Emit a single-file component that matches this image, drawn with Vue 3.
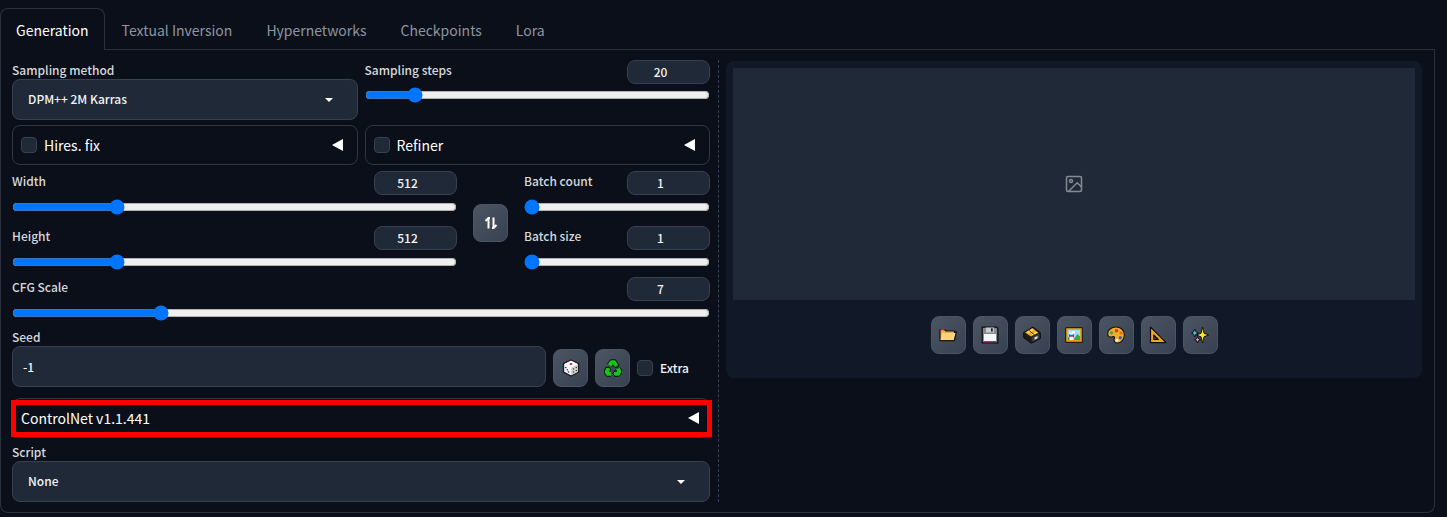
<script setup>
import { ref } from 'vue'

const tabs = ['Generation', 'Textual Inversion', 'Hypernetworks', 'Checkpoints', 'Lora']
const activeTab = ref('Generation')
const steps = ref(20)
const width = ref(512)
const height = ref(512)
const batchCount = ref(1)
const batchSize = ref(1)
const cfg = ref(7)
const seed = ref('-1')
const hires = ref(false)
const refiner = ref(false)
const extra = ref(false)

function swapSize() {
  const w = width.value
  width.value = height.value
  height.value = w
}
</script>

<template>
  <main class="page">
    <nav class="tabs">
      <button
        v-for="tab in tabs"
        :key="tab"
        type="button"
        class="tab"
        :class="{ active: tab === activeTab }"
        @click="activeTab = tab"
      >{{ tab }}</button>
    </nav>

    <div class="panel">
      <section class="settings">
        <div class="pair top">
          <div class="field">
            <label class="label" for="sampler">Sampling method</label>
            <div class="select-wrap">
              <select id="sampler" class="box select"><option>DPM++ 2M Karras</option></select>
              <svg class="caret" viewBox="0 0 8 4" aria-hidden="true"><path d="M0 0h8L4 4z" /></svg>
            </div>
          </div>
          <div class="slider">
            <div class="head">
              <label class="label" for="steps">Sampling steps</label>
              <input v-model.number="steps" class="num" type="number" aria-label="Sampling steps value" />
            </div>
            <input id="steps" v-model.number="steps" class="range" type="range" min="1" max="150" />
          </div>
        </div>

        <div class="pair accordions">
          <div class="accordion">
            <input id="hires" v-model="hires" class="check" type="checkbox" />
            <label for="hires">Hires. fix</label>
            <button type="button" class="toggle" aria-label="Expand Hires. fix">
              <svg viewBox="0 0 11 12"><path d="M0 6 11 0v12z" /></svg>
            </button>
          </div>
          <div class="accordion">
            <input id="refiner" v-model="refiner" class="check" type="checkbox" />
            <label for="refiner">Refiner</label>
            <button type="button" class="toggle" aria-label="Expand Refiner">
              <svg viewBox="0 0 11 12"><path d="M0 6 11 0v12z" /></svg>
            </button>
          </div>
        </div>

        <div class="sizes">
          <div class="stack">
            <div class="slider">
              <div class="head">
                <label class="label" for="width">Width</label>
                <input v-model.number="width" class="num" type="number" aria-label="Width value" />
              </div>
              <input id="width" v-model.number="width" class="range" type="range" min="64" max="2048" step="8" />
            </div>
            <div class="slider">
              <div class="head">
                <label class="label" for="height">Height</label>
                <input v-model.number="height" class="num" type="number" aria-label="Height value" />
              </div>
              <input id="height" v-model.number="height" class="range" type="range" min="64" max="2048" step="8" />
            </div>
          </div>
          <button type="button" class="tool swap-button" aria-label="Swap width and height" @click="swapSize">
            <svg class="swap" viewBox="0 0 14 14" aria-hidden="true">
              <path d="M4.500 12.500V2.500M1.500 5l3-3h1.500M9.500 1.500v10M12.500 9l-3 3H8" />
            </svg>
          </button>
          <div class="stack">
            <div class="slider">
              <div class="head">
                <label class="label" for="bcount">Batch count</label>
                <input v-model.number="batchCount" class="num" type="number" aria-label="Batch count value" />
              </div>
              <input id="bcount" v-model.number="batchCount" class="range" type="range" min="1" max="100" />
            </div>
            <div class="slider">
              <div class="head">
                <label class="label" for="bsize">Batch size</label>
                <input v-model.number="batchSize" class="num" type="number" aria-label="Batch size value" />
              </div>
              <input id="bsize" v-model.number="batchSize" class="range" type="range" min="1" max="8" />
            </div>
          </div>
        </div>

        <div class="slider cfg">
          <div class="head">
            <label class="label" for="cfg">CFG Scale</label>
            <input v-model.number="cfg" class="num" type="number" aria-label="CFG Scale value" />
          </div>
          <input id="cfg" v-model.number="cfg" class="range" type="range" min="1" max="30" step="0.5" />
        </div>

        <div class="seed-row">
          <div class="field">
            <label class="label" for="seed">Seed</label>
            <input id="seed" v-model="seed" class="box text" type="text" />
          </div>
          <button type="button" class="tool" aria-label="Random seed">
            <svg class="icon" viewBox="0 0 18 18">
              <path fill="#f4f4f4" stroke="#15181c" stroke-width="1.300" stroke-linejoin="round" d="M9 1 16.500 4.700v8.300L9 17 1.500 13V4.700z" />
              <path fill="#d4d4d4" d="M9 8.700 16 5v7.700L9 16.300z" />
              <path fill="#fff" d="M9 1.700 15.500 5 9 8.500 2.500 5z" />
              <ellipse cx="9" cy="5" rx="1.400" ry="1" fill="#d9122b" />
              <g fill="#333"><circle cx="3.800" cy="8.500" r=".8" /><circle cx="6.500" cy="13" r=".8" /><circle cx="5.200" cy="10.800" r=".8" /><circle cx="11.500" cy="13" r=".8" /><circle cx="11.500" cy="10" r=".8" /><circle cx="14.300" cy="8.500" r=".8" /><circle cx="14.300" cy="11.500" r=".8" /></g>
            </svg>
          </button>
          <button type="button" class="tool" aria-label="Reuse last seed">
            <svg class="icon" viewBox="0 0 18 18">
              <g fill="none" stroke-linejoin="round">
                <path stroke="#101510" stroke-width="6" d="M5.500 6.500 7.800 3.200h2.400L12.500 7M14 9.500l1.300 3.300-1.200 2H10M7 14.800H4l-1.300-2L4.500 9" />
                <path stroke="#18c51c" stroke-width="4" d="M5.500 6.500 7.800 3.200h2.400L12.500 7M14 9.500l1.300 3.300-1.200 2H10M7 14.800H4l-1.300-2L4.500 9" />
                <path stroke="#101510" stroke-width="1" d="m11 8.500 3.500-.5.500-3M11 11.500 8.500 14.500l2.500 2.500M2 8.500l3.500-.5 1.500 3" />
              </g>
            </svg>
          </button>
          <div class="extra">
            <input id="extra" v-model="extra" class="check" type="checkbox" />
            <label for="extra">Extra</label>
          </div>
        </div>

        <div class="accordion controlnet">
          <span>ControlNet v1.1.441</span>
          <button type="button" class="toggle" aria-label="Expand ControlNet">
            <svg viewBox="0 0 11 12"><path d="M0 6 11 0v12z" /></svg>
          </button>
        </div>

        <div class="field">
          <label class="label" for="script">Script</label>
          <div class="select-wrap">
            <select id="script" class="box select"><option>None</option></select>
            <svg class="caret" viewBox="0 0 8 4" aria-hidden="true"><path d="M0 0h8L4 4z" /></svg>
          </div>
        </div>
      </section>

      <div class="divider"></div>

      <section class="output">
        <div class="gallery">
          <div class="preview">
            <svg class="placeholder" viewBox="0 0 18 18" aria-label="No image">
              <rect x="1.500" y="1.500" width="15" height="15" rx="1.500" />
              <circle cx="6" cy="6" r="1.500" />
              <path d="m3.500 16.500 8.700-8.700 4.300 4.200" />
            </svg>
          </div>
          <div class="actions">
            <button type="button" class="tool" aria-label="Open output folder">
              <svg class="icon" viewBox="0 0 18 18">
                <path fill="#f0b04a" stroke="#111" stroke-width="1.200" stroke-linejoin="round" d="M1 14.500V3.500h4.500l1.500 1.500h8.500v9.500z" />
                <path fill="#e0202a" d="M1.500 3h4v1.300h-4z" />
                <path fill="#fcd27c" d="M1.600 14.200 3 7h13.800l-1.800 7.200z" />
                <path fill="none" stroke="#111" stroke-width="1.100" stroke-linejoin="round" d="M15.500 5.800h1.900l-2.100 9H1.200" />
              </svg>
            </button>
            <button type="button" class="tool" aria-label="Save image">
              <svg class="icon" viewBox="0 0 18 18">
                <path fill="#858a90" stroke="#111" stroke-width="1.300" d="M1.200 1.200h14.300l1.300 1.300v14.300H1.200z" />
                <path fill="#c8ccd0" d="M5 1.500h8v5H5z" />
                <path fill="#222" d="M10 2.200h1.800v3.300H10z" />
                <path fill="#f6f6f6" d="M3 8h12v7H3z" />
                <path fill="#ef0a7a" d="M3 15h12v1.300H3z" />
              </svg>
            </button>
            <button type="button" class="tool" aria-label="Save as zip">
              <svg class="icon" viewBox="0 0 18 18">
                <path fill="#1c1c1c" stroke="#0b0b0b" stroke-linejoin="round" d="M.7 6.500 10 1l7.300 5.700v5.800l-9 4.700L.7 11.500z" />
                <path fill="#f3a81d" d="M2 6.500 9.500 2l6 4.700L8 10.500z" />
                <path fill="#ffdc74" d="m4 6 5-3 1.500 1.300-5 3zM8.500 8.300l4.800-2.500 1 .9L9.500 9z" />
                <path fill="#3c3c3c" d="M8.700 11.300 16.500 7.500v4.700l-7.800 4z" />
                <path fill="#eee" d="m11.500 11.500 3-1.400v2.200l-3 1.500z" />
                <path stroke="#1c1c1c" stroke-width=".8" d="m6 4.500 5.500 4.300" />
              </svg>
            </button>
            <button type="button" class="tool" aria-label="Send to img2img">
              <svg class="icon" viewBox="0 0 18 18">
                <path fill="#e7a11c" stroke="#111" d="M.7 1.700h16.600v14.600H.7z" />
                <path fill="#a8dcf5" d="M3 4h12v10H3z" />
                <path fill="#fff" d="M4 6.500h3V5h3v2.500H4z" />
                <path fill="#2fae4a" d="m8 14 4.500-6 2.500 2.500V14zM3 11h3v3H3z" />
                <path fill="#b23b3b" d="M4 7.800 5.200 9h2.500L9 7.800V12H4z" />
                <path fill="#f5f5f5" d="M4.500 10.800h4V14h-4z" />
              </svg>
            </button>
            <button type="button" class="tool" aria-label="Send to inpaint">
              <svg class="icon" viewBox="0 0 18 18">
                <path fill="#f7ab1e" stroke="#111" stroke-width="1.100" d="M8.500 1C3.500 1.300.7 4.500.7 7.700c0 3 2.300 3.800 4.600 3 2-.7 2.700.3 2 2-.9 2.300.5 4.300 3 4.300 4 0 7-3.700 7-8.300C17.300 4 13.500.8 8.500 1z" />
                <circle cx="9.500" cy="4.700" r="1.700" fill="#d9302c" />
                <circle cx="4.500" cy="6.800" r="1.600" fill="#36a852" />
                <circle cx="14" cy="7" r="1.500" fill="#e86a14" />
                <circle cx="13.300" cy="11.700" r="1.600" fill="#2d5ed8" />
                <circle cx="10" cy="14.200" r="1.500" fill="#f5f5f5" />
              </svg>
            </button>
            <button type="button" class="tool" aria-label="Send to extras">
              <svg class="icon" viewBox="0 0 18 18">
                <path fill="#f3a51c" fill-rule="evenodd" stroke="#111" stroke-width="1.200" stroke-linejoin="round" d="M1.500 1 17 16.700H1.500zM4.800 9v4.500h4.500z" />
              </svg>
            </button>
            <button type="button" class="tool" aria-label="Upscale">
              <svg class="icon" viewBox="0 0 18 18">
                <g stroke="#111" stroke-linejoin="round">
                  <path fill="#4db9e6" d="M3.800 3 5 5.800 7.300 7 5 8.200 3.800 11 2.600 8.200.5 7l2.100-1.200z" />
                  <path fill="#f09bbd" d="m6.500 10.500.9 2.200 2.100 1-2.100 1-.9 2.300-.9-2.300-2.100-1 2.100-1z" />
                  <path fill="#ffe51f" d="m11.500 1 1.500 6.200L17.700 9 13 10.800 11.500 17 10 10.800 5.300 9 10 7.200z" />
                </g>
              </svg>
            </button>
          </div>
        </div>
      </section>
    </div>
  </main>
</template>

<style>
body {
  margin: 0;
  background: #0b0f19;
}
</style>

<style scoped>
.page {
  padding: 8px 12px 0 0;
  color: #f3f4f6;
  font-family: "Source Sans Pro", "Noto Sans CJK SC", sans-serif;
  font-size: 14px;
  line-height: 20px;
}
.page *,
.page *::after {
  box-sizing: border-box;
}
button,
input,
select {
  margin: 0;
  font: inherit;
  color: inherit;
}
.tabs {
  display: flex;
  border-bottom: 1px solid #2b323e;
}
.tab {
  height: 42px;
  margin-bottom: -1px;
  padding: 0 16px;
  border: 1px solid transparent;
  border-bottom: 0;
  border-radius: 8px 8px 0 0;
  background: none;
  color: #8b95a3;
}
.tab.active {
  padding: 0 15px;
  border-color: #2b323e;
  background: #0b0f19;
  color: #fff;
}
.panel {
  display: grid;
  grid-template-columns: minmax(0, 698fr) 16px minmax(0, 696fr);
  padding: 10px 12px 10px 11px;
  border: 1px solid #2b323e;
  border-top: 0;
  border-radius: 0 0 8px 8px;
}
.settings {
  display: flex;
  flex-direction: column;
}
.pair {
  display: grid;
  grid-template-columns: 1fr 1fr;
  gap: 7px;
}
.accordions {
  margin: 5px 0 6px;
}
.field {
  display: flex;
  flex: 1;
  flex-direction: column;
  min-width: 0;
}
.label {
  color: #d5d8dd;
  font-size: 12px;
  font-weight: 500;
  line-height: 19px;
}
.box {
  width: 100%;
  height: 41px;
  border: 1px solid #374151;
  border-radius: 8px;
  background: #1f2937;
  font-size: 12px;
  font-weight: 500;
}
.select {
  appearance: none;
  padding: 0 15px 1px;
}
.text {
  padding: 0 10px 1px;
}
.select-wrap {
  position: relative;
}
.caret {
  position: absolute;
  top: 19px;
  right: 25px;
  width: 8px;
  height: 4px;
  fill: #fff;
  pointer-events: none;
}
.slider {
  display: flex;
  flex-direction: column;
  gap: 4px;
}
.top .slider {
  gap: 3px;
}
.head {
  display: flex;
  align-items: flex-start;
  justify-content: space-between;
  height: 24px;
}
.num {
  appearance: textfield;
  width: 83px;
  height: 24px;
  padding: 0 16px 1px 0;
  border: 1px solid #374151;
  border-radius: 8px;
  background: #1f2937;
  font-size: 12px;
  font-weight: 500;
  text-align: center;
}
.num::-webkit-inner-spin-button {
  display: none;
}
.range {
  width: 100%;
  height: 16px;
  accent-color: #0075ff;
}
.accordion {
  display: flex;
  align-items: center;
  height: 40px;
  padding: 0 14px 0 8px;
  border: 1px solid #2f3744;
  border-radius: 8px;
  color: #fff;
}
.check {
  appearance: none;
  flex: none;
  width: 16px;
  height: 16px;
  margin-right: 7px;
  border: 1px solid #374151;
  border-radius: 4px;
  background: #1f2937;
}
.check:checked {
  background: #2563eb;
}
.toggle {
  display: flex;
  margin-left: auto;
  padding: 0;
  border: 0;
  background: none;
}
.toggle svg {
  width: 11px;
  height: 12px;
  fill: #fff;
}
.sizes {
  display: grid;
  grid-template-columns: minmax(0, 445fr) 35px minmax(0, 186fr);
  gap: 16px;
  align-items: center;
}
.stack {
  display: flex;
  flex-direction: column;
  gap: 11px;
}
.tool {
  display: flex;
  flex: none;
  align-items: center;
  justify-content: center;
  width: 35px;
  height: 38px;
  padding: 0;
  border: 1px solid #4b5563;
  border-radius: 8px;
  background: linear-gradient(to bottom right, #4b5563, #374151);
}
.swap-button {
  margin-top: 5px;
}
.icon {
  width: 18px;
  height: 18px;
}
.swap {
  width: 14px;
  height: 14px;
  fill: none;
  stroke: #fff;
  stroke-width: 2;
}
.cfg {
  margin: 7px 0 6px;
}
.seed-row {
  display: flex;
  align-items: flex-end;
  gap: 7px;
}
.extra {
  display: flex;
  align-items: center;
  width: 73px;
  height: 38px;
  font-size: 12px;
  font-weight: 500;
}
.controlnet {
  position: relative;
  margin: 11px 0 4px;
}
.controlnet::after {
  content: "";
  position: absolute;
  inset: 1px -3px 0 -2px;
  border: 5px solid #f00;
  pointer-events: none;
}
.controlnet .toggle {
  margin-right: -4px;
}
.divider {
  justify-self: center;
  border-left: 1px dashed #374151;
}
.output {
  padding-top: 1px;
}
.gallery {
  padding: 7px 7px 24px;
  border-radius: 8px;
  background: #111827;
}
.preview {
  display: flex;
  align-items: center;
  justify-content: center;
  height: 232px;
  background: #1f2937;
}
.placeholder {
  width: 18px;
  height: 18px;
  fill: none;
  stroke: #858b95;
  stroke-width: 1.5;
}
.actions {
  display: flex;
  justify-content: center;
  gap: 7px;
  margin-top: 16px;
}
</style>
